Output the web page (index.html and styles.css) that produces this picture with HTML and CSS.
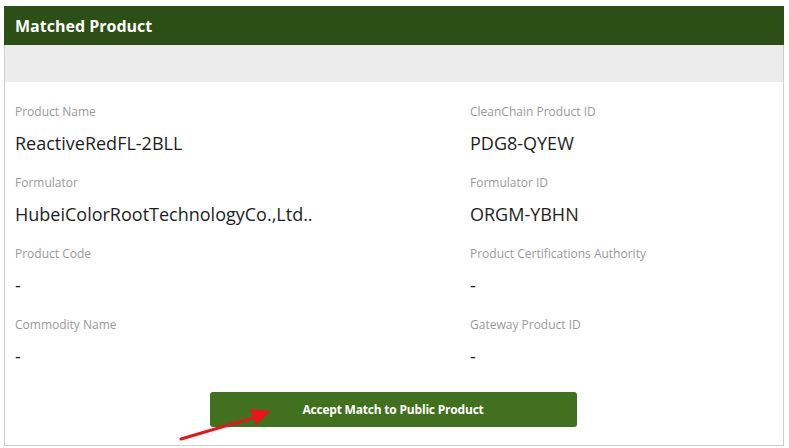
FILE: index.html
```html
<!DOCTYPE html>
<html>
<head>
<meta charset="utf-8">
<link rel="stylesheet" href="styles.css">
</head>
<body>
<div class="panel">
  <div class="panel-header">Matched Product</div>
  <div class="panel-band"></div>
  <div class="panel-body">
    <div class="fields">
      <div class="field"><div class="label">Product Name</div><div class="value">ReactiveRedFL-2BLL</div></div>
      <div class="field"><div class="label">CleanChain Product ID</div><div class="value">PDG8-QYEW</div></div>
      <div class="field"><div class="label">Formulator</div><div class="value">HubeiColorRootTechnologyCo.,Ltd..</div></div>
      <div class="field"><div class="label">Formulator ID</div><div class="value">ORGM-YBHN</div></div>
      <div class="field"><div class="label">Product Code</div><div class="value">-</div></div>
      <div class="field"><div class="label">Product Certifications Authority</div><div class="value">-</div></div>
      <div class="field"><div class="label">Commodity Name</div><div class="value">-</div></div>
      <div class="field"><div class="label">Gateway Product ID</div><div class="value">-</div></div>
    </div>
    <div class="actions">
      <button class="accept-btn">Accept Match to Public Product</button>
    </div>
  </div>
  <svg class="arrow" width="100" height="40" viewBox="0 0 100 40">
    <line x1="5" y1="34" x2="80" y2="12" stroke="#e8151b" stroke-width="3" stroke-linecap="round"/>
    <polygon points="95,6 74,4 80,20" fill="#e8151b"/>
  </svg>
</div>
</body>
</html>
```
FILE: styles.css
```css
html, body {
  margin: 0;
  padding: 0;
  background: #fff;
}
body {
  font-family: "Open Sans", "Noto Sans", sans-serif;
}
.panel {
  position: relative;
  margin: 6px 0 0 4px;
  width: 778px;
  border: 1px solid #cfcfcf;
  border-top: none;
  background: #fff;
}
.panel-header {
  height: 39px;
  background: #2b4f14;
  color: #fff;
  font-weight: 700;
  font-size: 16px;
  line-height: 41px;
  margin: 0 -1px;
  padding-left: 11px;
  overflow: hidden;
}
.panel-band {
  height: 37px;
  background: #ececec;
}
.panel-body {
  padding: 20px 10px 18px 10px;
}
.fields {
  display: grid;
  grid-template-columns: 455px 1fr;
}
.field {
  height: 71px;
}
.label {
  font-size: 12px;
  line-height: 20px;
  color: #9a9a9a;
}
.value {
  margin-top: 6px;
  font-size: 18px;
  line-height: 30px;
  color: #1e1e1e;
}
.actions {
  display: flex;
  justify-content: center;
  margin-top: 6px;
  padding-right: 2px;
}
.accept-btn {
  width: 367px;
  height: 35px;
  border: none;
  border-radius: 3px;
  background: #41701f;
  color: #fff;
  font-family: "Open Sans", "Noto Sans", sans-serif;
  font-weight: 700;
  font-size: 12px;
  letter-spacing: -0.2px;
  padding: 0;
}
.arrow {
  position: absolute;
  left: 171px;
  top: 399px;
}
```
